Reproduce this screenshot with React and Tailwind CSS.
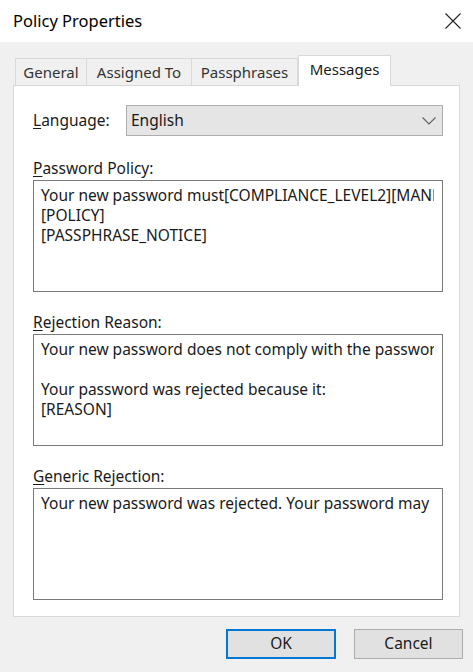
const font = { fontFamily: '"Noto Sans", "Open Sans", sans-serif' };

const fields = [
  {
    key: 'P',
    rest: 'assword Policy:',
    lines: ['Your new password must[COMPLIANCE_LEVEL2][MAND', '[POLICY]', '[PASSPHRASE_NOTICE]']
  },
  {
    key: 'R',
    rest: 'ejection Reason:',
    lines: ['Your new password does not comply with the password', ' ', 'Your password was rejected because it:', '[REASON]']
  },
  {
    key: 'G',
    rest: 'eneric Rejection:',
    lines: ['Your new password was rejected. Your password may']
  }
];

const tabs = [
  { label: 'General', width: 'w-[72px]' },
  { label: 'Assigned To', width: 'w-[106px]' },
  { label: 'Passphrases', width: 'w-[107px]' }
];

export default function App() {
  return (
    <div className="flex h-[672px] w-[473px] flex-col bg-[#f0f0f0] text-[15.5px] text-[#1a1a1a]" style={font}>
      <div className="flex h-[42px] shrink-0 items-center justify-between bg-white pl-[13px] pr-[12px]">
        <span className="text-[16.5px] text-black">Policy Properties</span>
        <svg className="h-[16px] w-[16px]" viewBox="0 0 16 16" aria-hidden="true">
          <path d="M0.5 0.5 L15.5 15.5 M15.5 0.5 L0.5 15.5" stroke="#222" strokeWidth="1.1" fill="none" />
        </svg>
      </div>

      <div className="mt-[13px] flex items-end pl-[15px] text-[15px]">
        {tabs.map((tab) => (
          <div
            className={`${tab.width} flex h-[27px] items-center justify-center border border-b-0 border-[#d9d9d9] bg-[#f0f0f0] text-[#333] -ml-px first:ml-0`}
            key={tab.label}
          >
            {tab.label}
          </div>
        ))}
        <div className="relative z-10 -mb-px flex h-[31px] w-[93px] items-start justify-center border border-b-0 border-[#d9d9d9] bg-white pt-[2px] text-[#1a1a1a]">
          Messages
        </div>
      </div>

      <div className="mx-[13px] flex h-[532px] flex-col border border-[#d9d9d9] bg-white pl-[19px] pr-[16px] pt-[19px]">
        <div className="flex items-center">
          <span className="w-[93px] text-[#1a1a1a]">
            <span className="underline underline-offset-2">L</span>anguage:
          </span>
          <div className="flex h-[31px] flex-1 items-center justify-between border border-[#adadad] bg-[#e5e5e5] pl-[4px] pr-[6px]">
            <span>English</span>
            <svg className="h-[8px] w-[14px]" viewBox="0 0 14 8" aria-hidden="true">
              <polyline points="0.5,0.5 7,7 13.5,0.5" stroke="#606060" strokeWidth="1.1" fill="none" />
            </svg>
          </div>
        </div>

        {fields.map((field, index) => (
          <div className={index === 0 ? 'mt-[22px]' : 'mt-[20px]'} key={field.key}>
            <div className="h-[20px] leading-[20px]">
              <span className="underline underline-offset-2">{field.key}</span>
              {field.rest}
            </div>
            <div className="mt-[2px] h-[112px] overflow-hidden border border-[#7a7a7a] bg-white pl-[7px] pr-[8px] pt-[4px]">
              <div className="overflow-hidden">
                {field.lines.map((line, lineIndex) => (
                  <div className="h-[20px] overflow-hidden whitespace-pre leading-[20px]" key={lineIndex}>
                    {line}
                  </div>
                ))}
              </div>
            </div>
          </div>
        ))}
      </div>

      <div className="mt-[12px] flex justify-end gap-[18px] pr-[10px]">
        <button className="h-[30px] w-[110px] border-2 border-[#0078d7] bg-[#e1e1e1] text-[#1a1a1a]" type="button">
          OK
        </button>
        <button className="h-[30px] w-[109px] border border-[#adadad] bg-[#e1e1e1] text-[#1a1a1a]" type="button">
          Cancel
        </button>
      </div>
    </div>
  );
}
